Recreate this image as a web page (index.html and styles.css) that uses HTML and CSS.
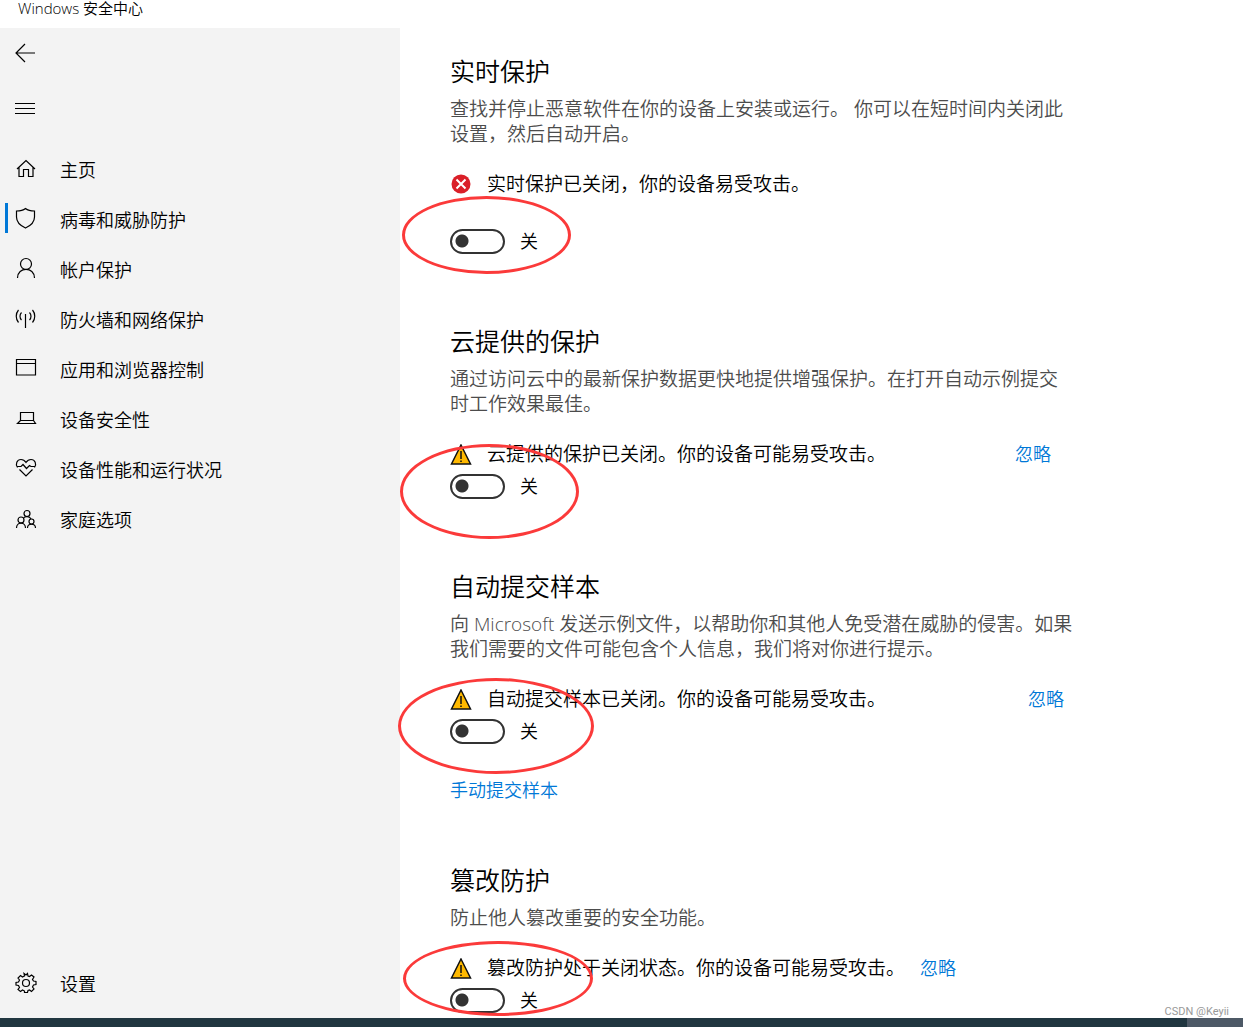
FILE: index.html
```
<!DOCTYPE html>
<html lang="zh-CN">
<head>
<meta charset="utf-8">
<meta name="viewport" content="width=device-width, initial-scale=1">
<title>Windows 安全中心</title>
<link rel="stylesheet" href="styles.css">
</head>
<body>
<div class="window">
  <header class="titlebar">Windows 安全中心</header>
  <div class="body">
    <aside class="sidebar">
      <button class="icon-button" type="button" aria-label="返回">
        <svg class="icon" viewBox="0 0 22 22"><path d="M20 11H1M10 2L1 11L10 20"/></svg>
      </button>
      <button class="icon-button" type="button" aria-label="菜单">
        <svg class="icon icon-crisp" viewBox="0 0 22 22"><path d="M0 5.5H20M0 10.5H20M0 15.5H20"/></svg>
      </button>
      <nav class="nav">
        <a class="nav-item" href="#home">
          <svg class="icon" viewBox="0 0 22 22"><path d="M2 10L11 1.500L20 10M4 8.500V17.500H8.500V10.500H13.500V17.500H18V8.500"/></svg>
          <span>主页</span></a>
        <a class="nav-item is-active" href="#virus" aria-current="page">
          <svg class="icon" viewBox="0 0 22 22"><path d="M10.500 -.5C8 1.500 5 2 1.500 2V8C1.500 13 5 16.500 10.500 19C16 16.500 19.500 13 19.500 8V2C16 2 13 1.500 10.500 -.5Z"/></svg>
          <span>病毒和威胁防护</span></a>
        <a class="nav-item" href="#account">
          <svg class="icon" viewBox="0 0 22 22"><circle cx="11" cy="5" r="5.500"/><path d="M2.500 19C2.500 7.500 19.500 7.500 19.500 19"/></svg>
          <span>帐户保护</span></a>
        <a class="nav-item" href="#firewall">
          <svg class="icon" viewBox="0 0 22 22"><path d="M10.500 5V19M6.500 3.500C4.500 5.500 4.500 9 6.500 11M14.500 3.500C16.500 5.500 16.500 9 14.500 11M3.500 1C.5 4.500 .5 10 3.500 13.500M17.500 1C20.500 4.500 20.500 10 17.500 13.500"/></svg>
          <span>防火墙和网络保护</span></a>
        <a class="nav-item" href="#apps">
          <svg class="icon" viewBox="0 0 22 22"><path d="M1.500 .5H20.500V16H1.500ZM1.500 4.500H20.500"/></svg>
          <span>应用和浏览器控制</span></a>
        <a class="nav-item" href="#device">
          <svg class="icon" viewBox="0 0 22 22"><path d="M5.500 3.500H18.500V11.500H5.500ZM5.500 11.500L2.500 14.500H20.500L18.500 11.500"/></svg>
          <span>设备安全性</span></a>
        <a class="nav-item" href="#health">
          <svg class="icon" viewBox="0 0 22 22"><path d="M2.500 8.500C0 5 2 .5 6 .5C8.500 .5 10 2 11 3.500C12 2 13.500 .5 16 .5C20 .5 22 5 19.500 8.500M1.500 7.500H6L8 5.500L11.500 9.500L14.500 6.500L16 7.500H20.500M4.500 10.500L11 17L17.500 10.500"/></svg>
          <span>设备性能和运行状况</span></a>
        <a class="nav-item" href="#family">
          <svg class="icon" viewBox="0 0 22 22"><circle cx="12" cy="4.500" r="3"/><circle cx="6" cy="11" r="3"/><circle cx="16.500" cy="12.500" r="2.500"/><path d="M1.500 19C1.500 12.500 10.500 12.500 10.500 19M12.500 19C12.500 14 20.500 14 20.500 19M8.500 9C10 7 14.500 7 16 10"/></svg>
          <span>家庭选项</span></a>
      </nav>
      <a class="nav-item settings" href="#settings">
        <svg class="icon" viewBox="0 0 22 22"><circle cx="11" cy="10" r="3.500"/><path d="M9 .5L9.500 3L7.500 4L5.500 2.500L3 5L4.500 7L3.500 9L1 9.500V12L3.500 12.500L4.500 14.500L3 16.500L5.500 18.500L7.500 17L9.500 18L9.500 19.500H12.500L13 17.500L14.500 17L16.500 18.500L19 16L17.500 14L18.500 12L21 11.500V8.500L18.500 8L17.500 6.500L19 4L16.500 2L14.500 3.500L13 3L12.500 .5L11 2Z"/></svg>
        <span>设置</span></a>
    </aside>

    <main class="content">
      <section class="setting setting-realtime">
        <h2>实时保护</h2>
        <p class="description">查找并停止恶意软件在你的设备上安装或运行。 你可以在短时间内关闭此设置，然后自动开启。</p>
        <div class="status">
          <svg class="status-icon" viewBox="0 0 22 22"><circle cx="11" cy="10" r="9.500" fill="#da1f28"/><path d="M6.500 5.500L15.500 14.500M15.500 5.500L6.500 14.500" stroke="#fff" stroke-width="2"/></svg>
          <span>实时保护已关闭，你的设备易受攻击。</span>
        </div>
        <label class="toggle"><input type="checkbox" role="switch"><span>关</span></label>
        <span class="mark"></span>
      </section>

      <section class="setting setting-cloud">
        <h2>云提供的保护</h2>
        <p class="description">通过访问云中的最新保护数据更快地提供增强保护。在打开自动示例提交时工作效果最佳。</p>
        <div class="status">
          <svg class="status-icon" viewBox="0 0 22 22"><path d="M11 1L20.500 20H1.500Z" fill="#ffb900" stroke="#111" stroke-width="1.500"/><path d="M11 7V15M11 16.500V18" stroke="#111" stroke-width="1.500"/></svg>
          <span>云提供的保护已关闭。你的设备可能易受攻击。</span>
          <a href="#dismiss-cloud">忽略</a>
        </div>
        <label class="toggle"><input type="checkbox" role="switch"><span>关</span></label>
        <span class="mark"></span>
      </section>

      <section class="setting setting-sample">
        <h2>自动提交样本</h2>
        <p class="description">向 Microsoft 发送示例文件，以帮助你和其他人免受潜在威胁的侵害。如果我们需要的文件可能包含个人信息，我们将对你进行提示。</p>
        <div class="status">
          <svg class="status-icon" viewBox="0 0 22 22"><path d="M11 1L20.500 20H1.500Z" fill="#ffb900" stroke="#111" stroke-width="1.500"/><path d="M11 7V15M11 16.500V18" stroke="#111" stroke-width="1.500"/></svg>
          <span>自动提交样本已关闭。你的设备可能易受攻击。</span>
          <a href="#dismiss-sample">忽略</a>
        </div>
        <label class="toggle"><input type="checkbox" role="switch"><span>关</span></label>
        <a class="submit-link" href="#submit">手动提交样本</a>
        <span class="mark"></span>
      </section>

      <section class="setting setting-tamper">
        <h2>篡改防护</h2>
        <p class="description">防止他人篡改重要的安全功能。</p>
        <div class="status">
          <svg class="status-icon" viewBox="0 0 22 22"><path d="M11 1L20.500 20H1.500Z" fill="#ffb900" stroke="#111" stroke-width="1.500"/><path d="M11 7V15M11 16.500V18" stroke="#111" stroke-width="1.500"/></svg>
          <span>篡改防护处于关闭状态。你的设备可能易受攻击。</span>
          <a href="#dismiss-tamper">忽略</a>
        </div>
        <label class="toggle"><input type="checkbox" role="switch"><span>关</span></label>
        <span class="mark"></span>
      </section>
    </main>
  </div>
  <footer class="taskbar"><span class="taskbar-end"></span></footer>
  <span class="watermark">CSDN @Keyii</span>
</div>
</body>
</html>
```
FILE: styles.css
```
* {
  box-sizing: border-box;
}

body {
  margin: 0;
  background: #fff;
  color: #000;
  font-family: "Open Sans", "Noto Sans CJK SC", sans-serif;
  font-size: 18px;
  font-weight: 350;
}

a {
  color: #0078d7;
  text-decoration: none;
}

.window {
  position: relative;
  display: flex;
  flex-direction: column;
  min-height: 100vh;
}

.titlebar {
  height: 28px;
  padding-left: 18px;
  font-size: 15px;
  line-height: 16px;
}

.body {
  display: flex;
  flex: 1;
}

/* Sidebar */
.sidebar {
  display: flex;
  flex-direction: column;
  flex: 0 0 400px;
  padding-bottom: 9px;
  background: #f3f3f3;
}

.icon-button {
  display: flex;
  align-items: center;
  height: 50px;
  margin: 0 0 6px;
  padding: 0 15px;
  border: 0;
  background: none;
  color: inherit;
}

.icon {
  flex: none;
  width: 22px;
  height: 22px;
  overflow: visible;
  fill: none;
  stroke: #000;
  stroke-width: 1.2;
}

.icon-crisp {
  stroke-width: 1;
}

.nav {
  margin-top: 5px;
}

.nav-item {
  display: flex;
  align-items: center;
  gap: 23px;
  height: 50px;
  padding-left: 15px;
  color: #000;
}

.nav-item span,
.toggle span {
  padding-bottom: 3px;
}

.is-active {
  background: linear-gradient(#0078d7, #0078d7) 5px 8px / 3px 30px no-repeat;
}

.settings {
  margin-top: auto;
}

/* Settings list */
.content {
  flex: 1;
  padding: 27px 50px 5px;
}

.setting {
  position: relative;
  max-width: 624px;
  margin-bottom: 71px;
}

.setting:last-child {
  margin-bottom: 0;
}

h2 {
  margin: 0 0 10px;
  font-size: 25px;
  font-weight: 350;
  line-height: 32px;
}

.description {
  margin: 0 0 25px;
  color: #4c4c4c;
  font-size: 19px;
  line-height: 25px;
}

.status {
  display: flex;
  align-items: center;
  gap: 15px;
  margin-bottom: 7px;
  font-size: 19px;
  line-height: 25px;
}

.status a {
  font-size: 18px;
}

.status-icon {
  flex: none;
  width: 22px;
  height: 22px;
  fill: none;
}

.toggle {
  display: flex;
  align-items: center;
  gap: 15px;
  width: fit-content;
  height: 25px;
}

.toggle input {
  appearance: none;
  width: 55px;
  height: 25px;
  margin: 0;
  border: 2px solid #333;
  border-radius: 13px;
  background: radial-gradient(circle at 10px 10px, #333 6px, transparent 7px);
}

.submit-link {
  display: block;
  width: fit-content;
  margin-top: 34px;
  line-height: 25px;
}

.setting-realtime .status {
  margin-bottom: 32px;
}

.setting-cloud .status {
  max-width: 601px;
}

.setting-sample .status {
  max-width: 614px;
}

.setting-cloud .status a,
.setting-sample .status a {
  margin-left: auto;
}

.setting-sample {
  margin-bottom: 61px;
}

/* Hand-drawn red rings over the switches */
.mark {
  position: absolute;
  border: 3px solid #fb3a3a;
  border-radius: 50%;
  pointer-events: none;
}

.setting-realtime .mark {
  top: 141px;
  left: -48px;
  width: 169px;
  height: 78px;
}

.setting-cloud .mark {
  top: 119px;
  left: -50px;
  width: 179px;
  height: 95px;
}

.setting-sample .mark {
  top: 108px;
  left: -52px;
  width: 196px;
  height: 96px;
}

.setting-tamper .mark {
  top: 77px;
  left: -47px;
  width: 190px;
  height: 75px;
}

/* Taskbar strip */
.taskbar {
  display: flex;
  justify-content: flex-end;
  height: 9px;
  background: #203640;
}

.taskbar-end {
  width: 56px;
  background: #4d5966;
}

.watermark {
  position: absolute;
  right: 14px;
  bottom: 8px;
  color: #999;
  font-family: Roboto, sans-serif;
  font-size: 11px;
  font-weight: 400;
  line-height: 14px;
}
```
